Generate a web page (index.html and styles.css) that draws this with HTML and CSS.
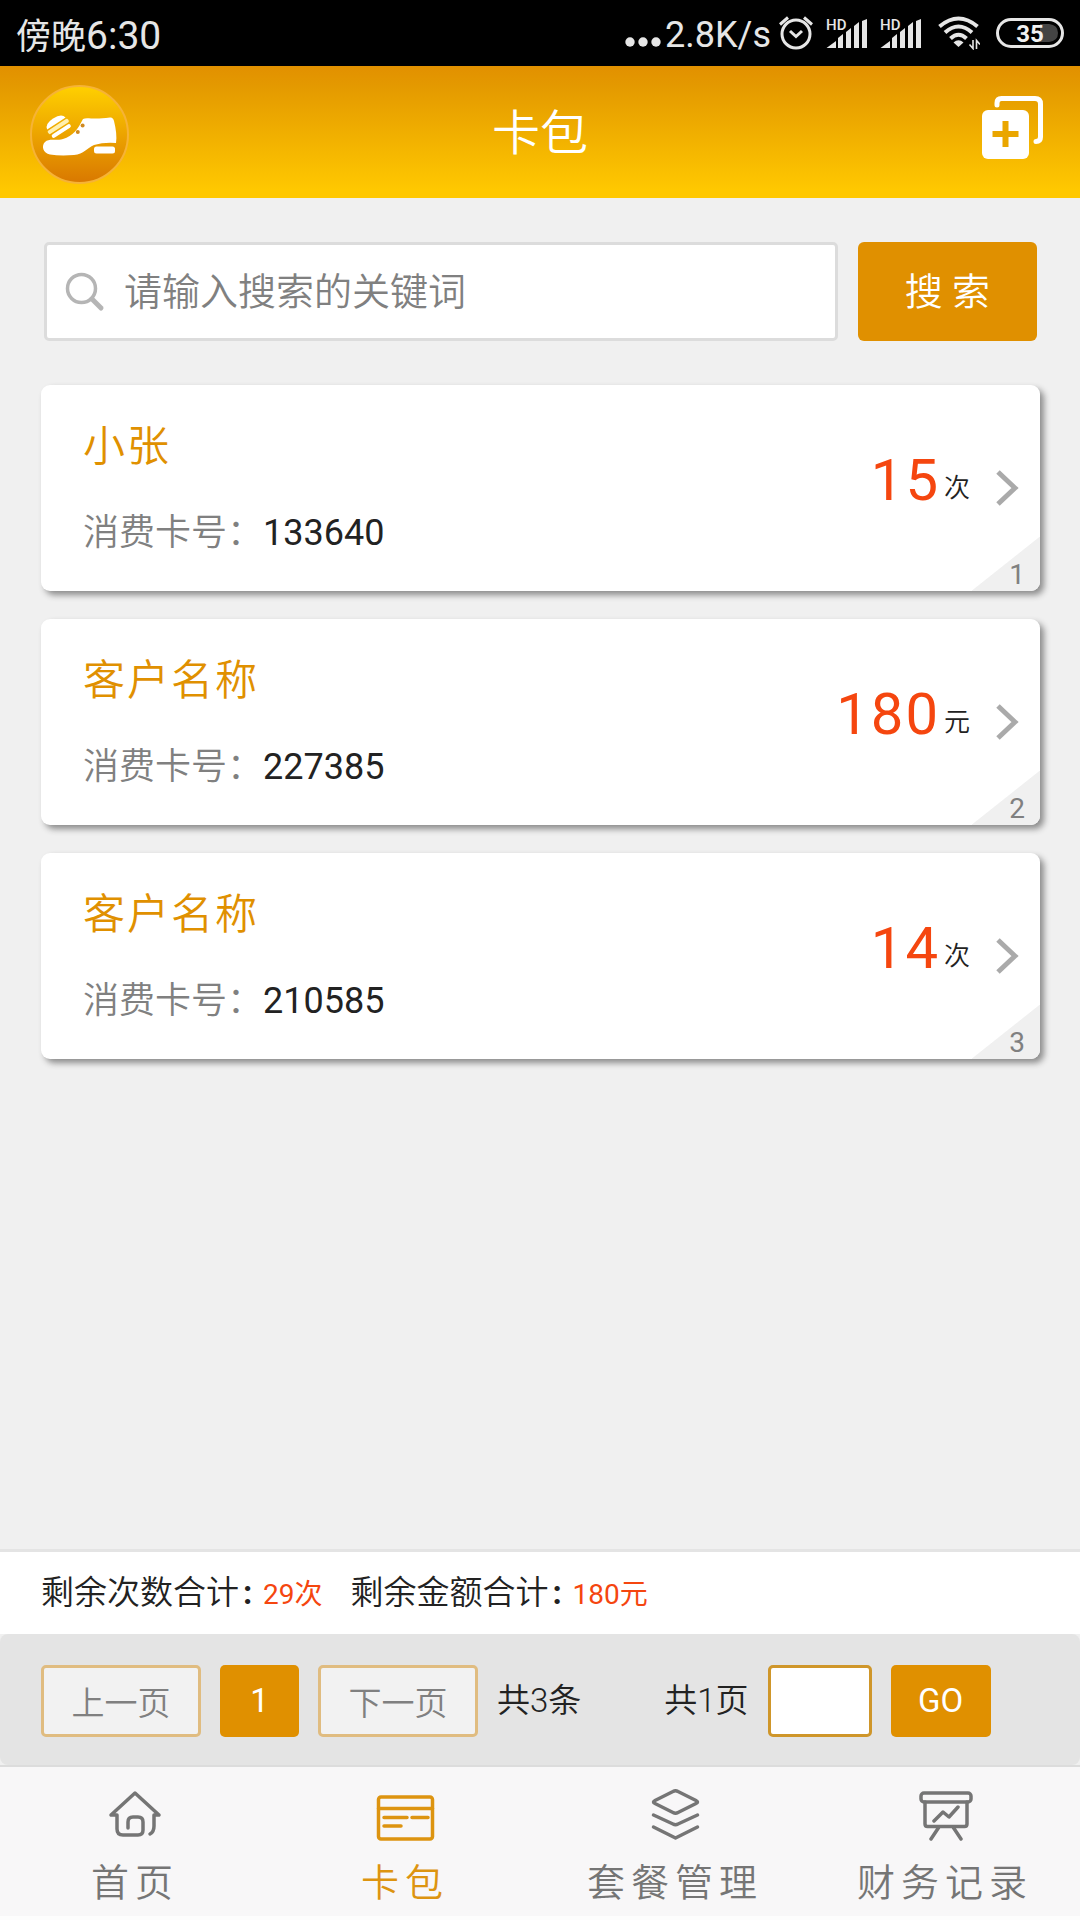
FILE: index.html
```html
<!DOCTYPE html>
<html lang="zh-CN">
<head>
<meta charset="utf-8">
<meta name="viewport" content="width=device-width, initial-scale=1">
<title>卡包</title>
<link rel="stylesheet" href="styles.css">
</head>
<body>
<div class="status">
  <div class="status-time">傍晚<span class="status-clock">6:30</span></div>
  <div class="status-info">
    <svg class="dots" width="36" height="34" viewBox="0 0 36 34" fill="currentColor" aria-hidden="true"><circle cx="5" cy="26" r="4.7"/><circle cx="18" cy="26" r="4.7"/><circle cx="31" cy="26" r="4.7"/></svg>
    <span class="status-speed">2.8K/s</span>
    <svg class="alarm" width="36" height="36" viewBox="0 0 36 36" fill="none" stroke="currentColor" stroke-width="3" aria-hidden="true"><circle cx="18" cy="19" r="14"/><path d="M12 16l6 5.500 6-5.500M2 9.500L10 2.500M34 9.500L26 2.500"/></svg>
    <svg class="signal" width="42" height="36" viewBox="0 0 42 36" fill="currentColor" aria-hidden="true"><text class="hd" x="0" y="15">HD</text><path d="M0.500 33L10 26V33zM12 33V23L17 19V33zM20 33V17L25 13V33zM28 33V11L33 7V33zM36 33V6L41 4V33z"/></svg>
    <svg class="signal" width="42" height="36" viewBox="0 0 42 36" fill="currentColor" aria-hidden="true"><text class="hd" x="0" y="15">HD</text><path d="M0.500 33L10 26V33zM12 33V23L17 19V33zM20 33V17L25 13V33zM28 33V11L33 7V33zM36 33V6L41 4V33z"/></svg>
    <svg class="wifi" width="42" height="34" viewBox="0 0 42 34" aria-hidden="true"><g fill="none" stroke="currentColor" stroke-width="4"><path d="M1.500 10.500Q20.500-5.500 39.500 10.500"/><path d="M7 16.500Q20.500 4.500 34 16.500"/><path d="M12.500 22.500Q20.500 15 28.500 22.500"/></g><path d="M15.500 26.500Q20.500 22 25.500 26.500L20.500 31z" fill="currentColor"/><path d="M35 24V32.500L31.500 28.500M38.500 33V24.500L42 28.500" fill="none" stroke="currentColor" stroke-width="1.600"/></svg>
    <svg class="battery" width="68" height="30" viewBox="0 0 68 30" aria-hidden="true"><rect x="1.500" y="1.500" width="65" height="27" rx="13.500" fill="none" stroke="currentColor" stroke-width="3"/><path d="M44 6H53Q62 7 62 15T53 24H44z" fill="#444"/><text class="level" x="34" y="24" text-anchor="middle">35</text></svg>
  </div>
</div>

<header class="header">
  <a class="logo" href="#" aria-label="店铺">
    <svg width="99" height="99" viewBox="0 0 99 99" aria-hidden="true">
      <defs><linearGradient id="logo-fill" x1="0" y1="0" x2="0" y2="1"><stop offset="0" stop-color="#ffd000"/><stop offset="1" stop-color="#d97800"/></linearGradient></defs>
      <circle cx="49.500" cy="49.500" r="48.500" fill="url(#logo-fill)" stroke="#f6b336" stroke-width="2"/>
      <path d="M53 34C57 32 63 35 80 32.500Q83 32 84 36C86 44 87 52 86 58Q74 57 64 60C57 63 54 69 44 70Q30 71 20 69.500C13 68 11 61 15 57C19 53 25 56 33 54C43 51 48 44 53 34z" fill="#fff"/>
      <rect x="64" y="61.500" width="21" height="7" rx="2.500" fill="#fff"/>
      <circle cx="52.600" cy="40.500" r="2" fill="#d08a20"/><circle cx="47.800" cy="47" r="2" fill="#d08a20"/>
      <g transform="rotate(-33 28 41)"><path d="M17 38Q18 32 28 32T39 38z" fill="#fff"/><rect x="16" y="39.500" width="24" height="4" rx="1.500" fill="#fff0b0"/><rect x="17" y="45" width="22" height="4" rx="2" fill="#fff"/></g>
    </svg>
  </a>
  <h1 class="title">卡包</h1>
  <button class="add" type="button" aria-label="添加">
    <svg width="62" height="64" viewBox="0 0 62 64" aria-hidden="true"><path d="M15 9V7Q15 2.500 19.500 2.500H53Q58.500 2.500 58.500 8V41Q58.500 45.500 54 45.500" fill="none" stroke="#fff" stroke-width="5" stroke-linecap="round"/><rect x="0" y="14" width="47" height="49" rx="6" fill="#fff"/><path d="M23.500 25V51M10.500 38H36.500" stroke="#eaa600" stroke-width="6"/></svg>
  </button>
</header>

<main class="main">
  <form class="search" role="search">
    <label class="search-box">
      <svg width="40" height="40" viewBox="0 0 40 40" fill="none" stroke="#b5b5b5" aria-hidden="true"><circle cx="16.500" cy="16.500" r="14" stroke-width="3.500"/><path d="M27 27L36 36" stroke-width="5" stroke-linecap="round"/></svg>
      <input class="search-input" type="text" placeholder="请输入搜索的关键词" aria-label="关键词">
    </label>
    <button class="search-button" type="submit">搜 索</button>
  </form>

  <ul class="cards">
    <li><a class="card" href="#">
      <div class="card-text"><h2 class="card-name">小张</h2><p class="card-number">消费卡号：<span class="number">133640</span></p></div>
      <div class="card-value"><span class="amount">15</span><span class="unit">次</span></div>
      <svg class="chevron" width="24" height="38" viewBox="0 0 24 38" aria-hidden="true"><path d="M3 3L20 19L3 35"/></svg>
      <span class="card-index">1</span>
    </a></li>
    <li><a class="card" href="#">
      <div class="card-text"><h2 class="card-name">客户名称</h2><p class="card-number">消费卡号：<span class="number">227385</span></p></div>
      <div class="card-value"><span class="amount">180</span><span class="unit">元</span></div>
      <svg class="chevron" width="24" height="38" viewBox="0 0 24 38" aria-hidden="true"><path d="M3 3L20 19L3 35"/></svg>
      <span class="card-index">2</span>
    </a></li>
    <li><a class="card" href="#">
      <div class="card-text"><h2 class="card-name">客户名称</h2><p class="card-number">消费卡号：<span class="number">210585</span></p></div>
      <div class="card-value"><span class="amount">14</span><span class="unit">次</span></div>
      <svg class="chevron" width="24" height="38" viewBox="0 0 24 38" aria-hidden="true"><path d="M3 3L20 19L3 35"/></svg>
      <span class="card-index">3</span>
    </a></li>
  </ul>
</main>

<footer>
  <div class="totals">
    <p class="total">剩余次数合计<span class="colon">:</span><span class="total-value">29次</span></p>
    <p class="total">剩余金额合计<span class="colon">:</span><span class="total-value">180元</span></p>
  </div>
  <form class="pager">
    <button class="page-step" type="button">上一页</button>
    <button class="page-current" type="button">1</button>
    <button class="page-step" type="button">下一页</button>
    <span class="pager-rows">共3条</span>
    <label class="pager-pages" for="page">共1页</label>
    <input class="page-input" id="page" type="text" inputmode="numeric">
    <button class="page-go" type="submit">GO</button>
  </form>
  <nav class="tabs">
    <a class="tab" href="#">
      <svg width="60" height="56" viewBox="0 0 60 56" stroke-width="3.500" aria-hidden="true"><path d="M6 30L30 8L54 30M6 30H12V44Q12 50 18 50H33Q38 50 38 45V37Q38 32 33 32H28Q23 32 23 37V43M54 30H49V41Q49 47 45 49"/></svg>
      <span>首页</span>
    </a>
    <a class="tab tab-active" href="#" aria-current="page">
      <svg width="60" height="56" viewBox="0 0 60 56" stroke-width="3.500" aria-hidden="true"><rect x="3.500" y="12" width="54" height="42" rx="2.500"/><path d="M3.500 23.500H57.500M9 32.500H32M37 32.500H53M9 41H26"/></svg>
      <span>卡包</span>
    </a>
    <a class="tab" href="#">
      <svg width="60" height="56" viewBox="0 0 60 56" stroke-width="3.500" aria-hidden="true"><path d="M28 6.500Q30.500 5 33 6.500L51 15.500Q54 17 51 18.500L33 27.500Q30.500 29 28 27.500L10 18.500Q7 17 10 15.500zM8.500 30L28 39Q30.500 40.500 33 39L52.500 30M8.500 42L30.500 53L52.500 42"/></svg>
      <span>套餐管理</span>
    </a>
    <a class="tab" href="#">
      <svg width="60" height="56" viewBox="0 0 60 56" stroke-width="3.500" aria-hidden="true"><rect x="6" y="8" width="50" height="9" rx="3"/><path d="M10 17V39Q10 41.500 12.500 41.500H49.500Q52 41.500 52 39V17M24 42L16 54M38 42L46 54M19 36L28 27L34 32L43 22"/></svg>
      <span>财务记录</span>
    </a>
  </nav>
</footer>
</body>
</html>
```
FILE: styles.css
```css
:root {
  --orange: #e09000;
  --grey: #808080;
  --red: #f5460f;
}

* {
  box-sizing: border-box;
}

body {
  display: flex;
  flex-direction: column;
  min-height: 100vh;
  margin: 0;
  background: #f0f0f0;
  color: #222;
  font-family: Roboto, "Noto Sans CJK SC", sans-serif;
  font-size: 33px;
  font-weight: 350;
}

h1, h2, p, ul {
  margin: 0;
  padding: 0;
  font-weight: inherit;
}

ul {
  list-style: none;
}

a {
  color: inherit;
  text-decoration: none;
}

button, input {
  margin: 0;
  border: 0;
  font: inherit;
}

svg {
  display: block;
  flex: none;
}

/* Status bar */
.status {
  display: flex;
  align-items: center;
  justify-content: space-between;
  height: 66px;
  padding: 0 16px;
  background: #000;
  color: #e6e6e6;
  font-size: 35px;
  font-weight: 400;
}

.status-clock {
  font-size: 39px;
}

.status-info {
  display: flex;
  align-items: center;
}

.status-speed {
  margin: 0 7px 0 4px;
  padding-top: 4px;
  font-size: 36px;
}

.signal {
  margin-left: 12px;
}

.wifi, .battery {
  margin-left: 16px;
}

.hd {
  font-size: 15px;
  font-weight: 500;
}

.level {
  fill: #f0f0f0;
  font-size: 24px;
  font-weight: 700;
}

/* Header */
.header {
  display: grid;
  grid-template-columns: 1fr auto 1fr;
  align-items: center;
  height: 132px;
  padding: 4px 30px 0;
  background: linear-gradient(#e29000, #e49a00 16%, #ffc800 94%);
  color: #fff;
}

.title {
  font-size: 48px;
  line-height: 64px;
}

.add {
  justify-self: end;
  padding: 0 6px 12px;
  background: none;
}

/* Search */
.main {
  flex: 1;
}

.search {
  display: flex;
  gap: 20px;
  padding: 44px 43px 44px 44px;
}

.search-box {
  display: flex;
  flex: 1;
  align-items: center;
  gap: 19px;
  height: 99px;
  padding: 0 18px;
  border: 3px solid #dcdcdc;
  border-radius: 5px;
  background: #fff;
}

.search-input {
  flex: 1;
  min-width: 0;
  padding: 0;
  outline: 0;
  background: none;
  font-size: 38px;
}

.search-input::placeholder {
  color: var(--grey);
}

.search-button {
  width: 179px;
  padding: 0 0 6px;
  border-radius: 6px;
  background: var(--orange);
  color: #fff;
  font-size: 38px;
}

/* Cards */
.cards {
  display: grid;
  gap: 28px;
  padding: 0 40px 28px 41px;
}

.card {
  position: relative;
  display: flex;
  align-items: center;
  height: 206px;
  padding: 0 21px 0 42px;
  border-radius: 9px;
  background: #fff;
  box-shadow: 4px 4px 6px #8c8c8c;
}

.card-text {
  flex: 1;
}

.card-name {
  color: var(--orange);
  font-size: 42px;
  line-height: 60px;
  letter-spacing: 2px;
}

.card-number {
  margin-top: 30px;
  color: var(--grey);
  font-size: 36px;
  line-height: 52px;
}

.number {
  color: #222;
  font-weight: 400;
}

.card-value {
  display: flex;
  align-items: flex-end;
  gap: 4px;
  margin-right: 25px;
  padding-bottom: 16px;
}

.amount {
  color: var(--red);
  font-size: 58px;
  font-weight: 400;
  line-height: 64px;
  letter-spacing: 2px;
}

.unit {
  font-size: 26px;
  line-height: 48px;
}

.chevron {
  fill: none;
  stroke: #aaa;
  stroke-width: 5px;
}

.card-index {
  position: absolute;
  right: 0;
  bottom: 0;
  width: 68px;
  height: 54px;
  padding: 20px 15px 0 0;
  border-bottom-right-radius: 9px;
  background: linear-gradient(to bottom right, transparent 49%, #f0f0f0 50%);
  color: var(--grey);
  font-size: 28px;
  font-weight: 400;
  line-height: 36px;
  text-align: right;
}

/* Totals */
.totals {
  display: flex;
  align-items: center;
  gap: 28px;
  height: 85px;
  padding: 0 41px 7px;
  border-top: 3px solid #e4e4e4;
  background: #fff;
}

.colon {
  display: inline-block;
  width: 24px;
  padding-left: 4px;
  font-weight: 700;
}

.total-value {
  color: var(--red);
  font-size: 28px;
  font-weight: 400;
}

/* Pager */
.pager {
  display: flex;
  align-items: center;
  gap: 19px;
  height: 131px;
  padding: 2px 41px 0;
  border-radius: 8px;
  background: #e4e4e4;
}

.pager button {
  height: 72px;
  padding: 0;
  border-radius: 5px;
}

.page-step {
  width: 160px;
  border: 3px solid #e0bc80;
  background: #f2f2f2;
  color: var(--grey);
}

.page-current, .page-go {
  background: var(--orange);
  color: #fff;
  font-weight: 400;
}

.page-current {
  width: 79px;
}

.page-go {
  width: 100px;
}

.pager-rows, .pager-pages {
  padding-bottom: 6px;
}

.pager-pages {
  margin-left: 64px;
}

.page-input {
  width: 104px;
  height: 72px;
  padding: 0 10px;
  border: 3px solid #cf962a;
  border-radius: 5px;
  background: #fff;
  text-align: center;
}

/* Tabs */
.tabs {
  display: grid;
  grid-template-columns: repeat(4, 1fr);
  border-top: 2px solid #dcdcdc;
  border-bottom: 4px solid #fdfdfd;
  background: #f8f7f8;
}

.tab {
  display: flex;
  flex-direction: column;
  align-items: center;
  gap: 14px;
  padding: 18px 0 4px;
  color: #757575;
  font-size: 38px;
  line-height: 57px;
  letter-spacing: 6px;
}

.tab svg {
  fill: none;
  stroke: currentColor;
  stroke-linecap: round;
  stroke-linejoin: round;
}

.tab-active {
  color: #dd9410;
}
```
